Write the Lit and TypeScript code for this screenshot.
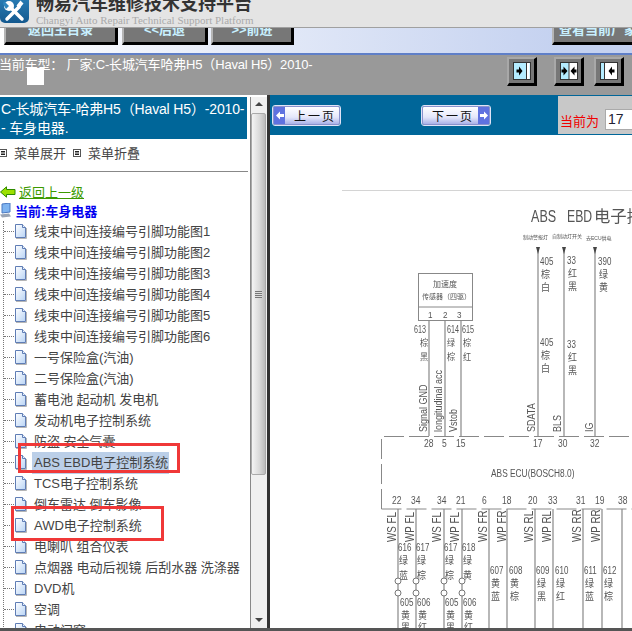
import { LitElement, html, css, svg } from "lit";
import { customElement } from "lit/decorators.js";

const items = [
  "线束中间连接编号引脚功能图1",
  "线束中间连接编号引脚功能图2",
  "线束中间连接编号引脚功能图3",
  "线束中间连接编号引脚功能图4",
  "线束中间连接编号引脚功能图5",
  "线束中间连接编号引脚功能图6",
  "一号保险盒(汽油)",
  "二号保险盒(汽油)",
  "蓄电池 起动机 发电机",
  "发动机电子控制系统",
  "防盗 安全气囊",
  "ABS EBD电子控制系统",
  "TCS电子控制系统",
  "倒车雷达 倒车影像",
  "AWD电子控制系统",
  "电喇叭 组合仪表",
  "点烟器 电动后视镜 后刮水器 洗涤器",
  "DVD机",
  "空调",
  "电动门窗",
];

const pageIcon = html`<svg class="page-icon" width="13" height="15" viewBox="0 0 13 15">
  <defs>
    <linearGradient id="pg" x1="0" y1="0" x2="1" y2="1">
      <stop offset="0" stop-color="#ffffff" />
      <stop offset="1" stop-color="#b9d4f5" />
    </linearGradient>
  </defs>
  <path d="M1.5 .5H8.5L11.5 3.5V13.5H1.5Z" fill="url(#pg)" stroke="#5f7db5" />
  <path d="M8.5 .5V3.5H11.5" fill="#eaf2fd" stroke="#5f7db5" />
  <path d="M2 14.5H12.5V4" fill="none" stroke="#b5b5b5" />
</svg>`;

const menuIcon = html`<svg class="menu-icon" width="8" height="8" viewBox="0 0 8 8">
  <rect x=".5" y=".5" width="7" height="7" fill="#fff" stroke="#555" />
  <path d="M2 2.5H6M2 4H6M2 5.5H6" stroke="#222" />
</svg>`;

// everything on the schematic uses page coordinates, see the viewBox below
function t(x: number, y: number, s: string, size = 10, sx = 0.8) {
  return svg`<text transform="translate(${x} ${y}) scale(${sx} 1)" font-size=${size}>${s}</text>`;
}
function up(x: number, y: number, s: string, size = 11, sx = 0.82) {
  return svg`<text transform="translate(${x} ${y}) rotate(-90) scale(${sx} 1)" font-size=${size}>${s}</text>`;
}
function stack(x: number, y: number, n: string, a: string, b: string, gap = 13) {
  return svg`${t(x, y, n)}${t(x + 1, y + 13, a, 10, 0.9)}${t(x + 1, y + 13 + gap, b, 10, 0.9)}`;
}
function wire(x: number, y1: number, y2: number) {
  return svg`<line x1=${x} y1=${y1} x2=${x} y2=${y2} class="wire" />`;
}
function arrow(x: number) {
  return svg`<path d="M${x - 2} 247H${x + 2}L${x} 254Z" fill="#444" />`;
}

const bottomPins: [number, string, number][] = [
  [392, "22", 398],
  [411, "34", 416],
  [437, "34", 444],
  [456, "21", 462],
  [482, "6", 489],
  [502, "18", 507],
  [528, "20", 535],
  [548, "33", 553],
  [576, "31", 583],
  [595, "19", 602],
  [618, "38", 622],
];

const schematic = svg`
  <line x1="342" y1="190" x2="632" y2="190" stroke="#aaa" />
  ${t(531, 222, "ABS", 17, 0.74)}
  ${t(567, 222, "EBD", 17, 0.72)}
  ${t(594, 222, "电子控制系统", 16, 1.02)}
  ${t(523, 239, "制动警报灯", 5, 1)}
  ${t(552, 238, "自制动灯开关", 5, 1)}
  ${t(586, 240, "去ECU供电", 5, 1)}
  ${[538, 564, 595].map((x) => svg`${wire(x, 249, 436)}${arrow(x)}`)}
  ${stack(540, 265, "405", "棕", "白")}
  ${stack(567, 264, "33", "红", "黑")}
  ${stack(598, 265, "390", "绿", "黄")}
  ${stack(540, 346, "405", "棕", "白")}
  ${stack(567, 348, "33", "红", "黑")}

  <rect x="418.5" y="273.5" width="54" height="47" fill="#fff" stroke="#888" />
  <line x1="418" y1="307" x2="472" y2="307" stroke="#888" />
  ${t(433, 287, "加速度", 8, 1)}
  ${t(422, 299, "传感器（四驱）", 7, 1)}
  ${t(428, 318, "1", 9, 0.9)}
  ${t(443, 318, "2", 9, 0.9)}
  ${t(457, 318, "3", 9, 0.9)}
  ${[429, 445, 461].map((x) => wire(x, 320, 436))}
  ${t(414, 333, "613", 10, 0.72)}
  ${t(447, 333, "614", 10, 0.72)}
  ${t(462, 333, "615", 10, 0.72)}
  ${t(420, 346, "棕", 9, 0.9)}
  ${t(420, 360, "黑", 9, 0.9)}
  ${t(447, 346, "绿", 9, 0.9)}
  ${t(447, 360, "棕", 9, 0.9)}
  ${t(463, 346, "棕", 9, 0.9)}
  ${t(463, 360, "红", 9, 0.9)}
  ${up(427, 432, "Signal GND")}
  ${up(442, 432, "longitudinal acc")}
  ${up(457, 432, "Vstob")}
  ${up(535, 432, "SDATA")}
  ${up(561, 432, "BLS")}
  ${up(593, 432, "IG")}

  <path d="M381.5 509V436.5H632M381.5 509H632" class="dash" />
  ${t(424, 447, "28", 10, 0.85)}
  ${t(442, 447, "5", 10, 0.85)}
  ${t(456, 447, "15", 10, 0.85)}
  ${t(533, 447, "17", 10, 0.85)}
  ${t(558, 447, "30", 10, 0.85)}
  ${t(590, 447, "32", 10, 0.85)}
  ${t(491, 477, "ABS ECU(BOSCH8.0)", 11, 0.76)}
  ${bottomPins.map(
    ([x, n, wx]) => svg`${t(x, 504, n, 10, 0.85)}${wire(wx, 509, 628)}`
  )}

  ${up(396, 542, "WS FL", 12)}
  ${up(414, 542, "WP FL", 12)}
  ${up(441, 542, "WS FL", 12)}
  ${up(459, 542, "WP FL", 12)}
  ${up(487, 542, "WS FR", 12)}
  ${up(506, 542, "WP FR", 12)}
  ${up(533, 542, "WS RL", 12)}
  ${up(551, 542, "WP RL", 12)}
  ${up(581, 542, "WS RR", 12)}
  ${up(600, 542, "WP RR", 12)}

  ${stack(398, 551, "616", "绿", "蓝", 15)}
  ${stack(416, 551, "617", "绿", "棕", 15)}
  ${stack(444, 551, "617", "绿", "棕", 15)}
  ${stack(462, 551, "618", "绿", "黄", 15)}
  ${[398, 416, 444, 462].map(
    (x) => svg`<circle cx=${x} cy="581" r="3" class="node" /><circle cx=${x} cy="593" r="3" class="node" />`
  )}
  ${stack(400, 606, "605", "黄", "黑", 12)}
  ${stack(417, 606, "606", "黄", "红", 12)}
  ${stack(445, 606, "605", "黄", "黑", 12)}
  ${stack(463, 606, "606", "黄", "红", 12)}
  ${stack(490, 574, "607", "黄", "蓝")}
  ${stack(509, 574, "608", "黄", "棕")}
  ${stack(536, 574, "609", "绿", "黑")}
  ${stack(555, 574, "610", "绿", "红")}
  ${stack(584, 574, "611", "绿", "蓝")}
  ${stack(603, 574, "612", "绿", "棕")}
`;

const arrowR = svg`<path d="M3.5 7.5H6V4.5L9.5 9L6 13.5V10.5H3.5Z" fill="#000" />`;
const arrowL = svg`<path d="M14.5 7.5H12V4.5L8.5 9L12 13.5V10.5H14.5Z" fill="#000" />`;

@customElement("app-root")
export class AppRoot extends LitElement {
  static styles = css`
    :host {
      display: block;
      width: 632px;
      height: 631px;
      overflow: hidden;
      position: relative;
      background: #fff;
      font-family: "Liberation Sans", "Noto Sans CJK SC", sans-serif;
      font-size: 13px;
    }

    /* top brand strip */
    .brand {
      height: 27px;
      background: #e4e4e4;
      border-bottom: 1px solid #a0a0a0;
      display: flex;
      overflow: hidden;
    }
    .logo {
      flex: none;
      margin-right: 6px;
    }
    .brand-title {
      font-family: "Liberation Serif", "Noto Sans CJK SC", serif;
      font-size: 18px;
      line-height: 18px;
      color: #333;
      margin-top: -5px;
      white-space: nowrap;
      font-weight: bold;
    }
    .brand-sub {
      font-family: "Liberation Serif", serif;
      font-size: 11px;
      line-height: 14px;
      color: #aaa;
      white-space: nowrap;
    }

    /* toolbar, buttons are cut by the strip above */
    .toolbar {
      height: 25px;
      background: linear-gradient(90deg, #fff 0%, #c5d2f0 88%);
      display: flex;
      align-items: flex-start;
      padding-left: 4px;
      border-bottom: 2px solid #5f7fc8;
      overflow: hidden;
    }
    .tool {
      flex: none;
      height: 14px;
      background: #777;
      border-left: 2px solid #b5b5b5;
      border-right: 3px solid #000;
      border-bottom: 3px solid #000;
      color: #c8f0ff;
      font-size: 13px;
      font-weight: bold;
      line-height: 3px;
      text-align: center;
      overflow: hidden;
      white-space: nowrap;
    }
    .tool.home {
      width: 109px;
      margin-right: 4px;
    }
    .tool.back {
      width: 81px;
      margin-right: 3px;
    }
    .tool.next {
      width: 78px;
    }
    .tool.maker {
      width: 73px;
      margin-left: auto;
      text-align: left;
      padding-left: 5px;
      border-right: 0;
    }

    /* grey model bar */
    .model {
      height: 40px;
      background: #999;
      position: relative;
      color: #fff;
      display: flex;
      justify-content: space-between;
    }
    .model-text {
      margin-left: -1px;
      margin-top: 2px;
      line-height: 15px;
      white-space: nowrap;
      letter-spacing: -0.17px;
    }
    .model-box {
      position: absolute;
      left: 27px;
      top: 13px;
      width: 17px;
      height: 17px;
      background: #fff;
    }
    .frames {
      display: flex;
      margin-right: 8px;
      margin-top: 2px;
    }
    .frame-btn {
      width: 25px;
      height: 24px;
      background: #777;
      border-style: solid;
      border-width: 2px 3px 3px 2px;
      border-color: #a8a8a8 #000 #000 #a8a8a8;
      display: flex;
      align-items: center;
      justify-content: center;
    }
    .frame-btn.a {
      margin-right: 17px;
    }
    .frame-btn.b {
      margin-right: 10px;
    }

    /* main split */
    .main {
      height: 533px;
      border-bottom: 3px solid #555;
      display: flex;
    }
    .side {
      width: 250px;
      flex: none;
      overflow: hidden;
      position: relative;
      padding-top: 2px;
    }
    .side-title {
      width: 247px;
      height: 42px;
      background: #006699;
      color: #fff;
      font-size: 14px;
      line-height: 19px;
      padding: 3px 0 0 1px;
      box-sizing: border-box;
      white-space: nowrap;
      letter-spacing: -0.15px;
    }
    .expand {
      height: 27px;
      padding-bottom: 5px;
      border-bottom: 1px solid #888;
      width: 248px;
      display: flex;
      align-items: center;
      color: #444;
    }
    .expand span {
      margin: 0 7px;
    }
    .menu-icon:first-child {
      margin-left: -1px;
    }
    .up-link {
      display: flex;
      align-items: center;
      height: 19px;
      margin-top: 10px;
      color: #3c9a00;
      text-decoration: underline;
      gap: 3px;
    }
    .current {
      display: flex;
      align-items: center;
      height: 19px;
      color: #0000f0;
      font-weight: bold;
      gap: 3px;
      margin-bottom: 1px;
    }
    .tree {
      margin-left: 3px;
      border-left: 1px dotted #777;
    }
    .row {
      height: 21px;
      display: flex;
      align-items: center;
      white-space: nowrap;
      color: #444;
    }
    .row::before {
      content: "";
      width: 10px;
      border-top: 1px dotted #777;
      flex: none;
    }
    .page-icon {
      flex: none;
      margin-right: 7px;
    }
    .label {
      padding: 2px 0;
      line-height: 16px;
    }
    .row.sel .label {
      background: #bbcfe8;
      padding: 3px 1px 3px 2px;
      margin-left: -2px;
    }

    .bar {
      width: 17px;
      flex: none;
      margin-top: 2px;
      border-left: 1px solid #888;
      background: #f0f0f0;
      position: relative;
      box-sizing: border-box;
    }
    .bar .thumb {
      position: absolute;
      left: 0;
      right: 1px;
      top: 16px;
      height: 362px;
      background: linear-gradient(90deg, #f4f4f4, #d8d8d8 60%, #bcbcbc);
      border: 1px solid #aaa;
      border-radius: 2px;
      box-sizing: border-box;
      display: flex;
      align-items: center;
      justify-content: center;
    }
    .grip {
      width: 7px;
      height: 7px;
      background: repeating-linear-gradient(#777 0 1px, #ddd 1px 2px);
    }
    .arr {
      position: absolute;
      left: 4px;
      width: 0;
      height: 0;
      border-left: 4px solid transparent;
      border-right: 4px solid transparent;
    }
    .arr.up {
      top: 5px;
      border-bottom: 4px solid #444;
    }
    .arr.down {
      bottom: 6px;
      border-top: 4px solid #444;
    }
    .split {
      width: 3px;
      flex: none;
      background: #333;
    }

    .content {
      flex: 1;
      min-width: 0;
      display: flex;
      flex-direction: column;
    }
    .pager {
      height: 40px;
      flex: none;
      background: #006699;
      display: flex;
    }
    .pager-left {
      flex: 1;
      display: flex;
      align-items: flex-start;
      padding: 11px 0 0 3px;
      gap: 82px;
    }
    .page-btn {
      height: 19px;
      box-sizing: border-box;
      border: 1px solid #8a92cc;
      outline: 1px solid #dfe3f7;
      background: linear-gradient(#fff, #e4e7fa 60%, #aab2e8);
      border-radius: 2px;
      display: flex;
      align-items: center;
      color: #111;
      font-size: 12px;
      letter-spacing: 2px;
      white-space: nowrap;
    }
    .page-btn .tip {
      width: 11px;
      height: 100%;
      background: #5f72e0;
      display: flex;
      align-items: center;
      justify-content: center;
      flex: none;
    }
    .page-btn .cap {
      flex: 1;
    }
    .page-btn.prev {
      width: 67px;
    }
    .page-btn.prev .cap {
      padding-left: 9px;
    }
    .page-btn.next {
      width: 68px;
    }
    .page-btn.next .cap {
      padding-left: 9px;
    }
    .page-now {
      width: 74px;
      flex: none;
      margin-top: 1px;
      height: 38px;
      background: #c8c8c8;
      display: flex;
      align-items: flex-end;
      padding: 0 0 4px 2px;
      box-sizing: border-box;
      color: #f00000;
      gap: 6px;
      white-space: nowrap;
    }
    .page-now .num {
      width: 40px;
      height: 21px;
      flex: none;
      box-sizing: border-box;
      background: #fff;
      border: 1px solid #aaa;
      color: #223;
      padding-left: 2px;
      font-size: 14px;
      line-height: 19px;
    }
    .sheet {
      flex: 1;
      min-height: 0;
      display: block;
      width: 362px;
      height: 493px;
    }
    .sheet text {
      fill: #555;
      font-family: "Liberation Sans", "Noto Sans CJK SC", sans-serif;
    }
    .wire {
      stroke: #888;
      stroke-width: 1.2;
    }
    .dash {
      fill: none;
      stroke: #888;
      stroke-dasharray: 20 5;
    }
    .node {
      fill: #fff;
      stroke: #777;
    }

    /* hand drawn red marks on top of the tree */
    .mark {
      position: absolute;
      box-sizing: border-box;
      border: 3px solid #f03838;
    }
    .mark.one {
      left: 18px;
      top: 443px;
      width: 162px;
      height: 30px;
    }
    .mark.two {
      left: 11px;
      top: 506px;
      width: 153px;
      height: 35px;
    }
  `;

  render() {
    return html`
      <div class="brand">
        <svg class="logo" width="30" height="24" viewBox="0 0 30 24">
          <defs>
            <linearGradient id="tile" x1="0" y1="0" x2="0" y2="1">
              <stop offset="0" stop-color="#2f86bd" />
              <stop offset="1" stop-color="#14598f" />
            </linearGradient>
          </defs>
          <rect x="0" y="-8" width="29" height="31" rx="5" fill="url(#tile)" />
          <path d="M11 8L22 19" stroke="#fff" stroke-width="3.5" stroke-linecap="round" />
          <circle cx="9" cy="6" r="5" fill="#fff" />
          <path d="M4 1L9 6L6 9L3 4Z" fill="#2f86bd" />
          <path d="M19 7L7 19" stroke="#fff" stroke-width="3.5" stroke-linecap="round" />
          <path d="M17 6L21 1M19 8L23 3M18 7L22 2" stroke="#fff" stroke-width="1.3" />
        </svg>
        <div>
          <div class="brand-title">畅易汽车维修技术支持平台</div>
          <div class="brand-sub">Changyi Auto Repair Technical Support Platform</div>
        </div>
      </div>

      <div class="toolbar">
        <div class="tool home">返回主目录</div>
        <div class="tool back">&lt;&lt;后退</div>
        <div class="tool next">&gt;&gt;前进</div>
        <div class="tool maker">查看当前厂家</div>
      </div>

      <div class="model">
        <div class="model-text">当前车型：&nbsp;厂家:C-长城汽车哈弗H5（Haval H5）2010-</div>
        <div class="model-box"></div>
        <div class="frames">
          <div class="frame-btn a">${this.frameIcon("right")}</div>
          <div class="frame-btn b">${this.frameIcon("both")}</div>
          <div class="frame-btn">${this.frameIcon("left")}</div>
        </div>
      </div>

      <div class="main">
        <div class="side">
          <div class="side-title">C-长城汽车-哈弗H5（Haval H5）-2010-<br />- 车身电器.</div>
          <div class="expand">
            ${menuIcon}<span>菜单展开</span>${menuIcon}<span>菜单折叠</span>
          </div>
          <div class="up-link">
            <svg width="16" height="12" viewBox="0 0 16 12">
              <path d="M.5 6L6.5 .8V3.5H15V8.5H6.5V11.2Z" fill="#9ce000" stroke="#2f8a00" />
            </svg>
            返回上一级
          </div>
          <div class="current">
            <svg width="12" height="15" viewBox="0 0 12 15">
              <path d="M2 1L10 0V9L2 10Z" fill="#7fb4f0" stroke="#4a78c0" />
              <path d="M0 11.5L9 10.5L11 13.5L2 14.5Z" fill="#9aa4b4" />
            </svg>
            当前:车身电器
          </div>
          <div class="tree">
            ${items.map(
              (name, i) => html`<div class="row ${i === 11 ? "sel" : ""}">
                ${pageIcon}<span class="label">${name}</span>
              </div>`
            )}
          </div>
        </div>
        <div class="bar">
          <div class="arr up"></div>
          <div class="thumb"><div class="grip"></div></div>
          <div class="arr down"></div>
        </div>
        <div class="split"></div>
        <div class="content">
          <div class="pager">
            <div class="pager-left">
              <div class="page-btn prev">
                <span class="tip">
                  <svg width="8" height="9" viewBox="0 0 8 9"><path d="M0 4.5L4 .5V3H8V6H4V8.5Z" fill="#fff" /></svg>
                </span>
                <span class="cap">上一页</span>
              </div>
              <div class="page-btn next">
                <span class="cap">下一页</span>
                <span class="tip">
                  <svg width="8" height="9" viewBox="0 0 8 9"><path d="M8 4.5L4 .5V3H0V6H4V8.5Z" fill="#fff" /></svg>
                </span>
              </div>
            </div>
            <div class="page-now">当前为<div class="num">17</div></div>
          </div>
          <svg class="sheet" viewBox="270 135 362 493">
            <defs>
              <filter id="soft" x="0" y="0" width="100%" height="100%">
                <feGaussianBlur stdDeviation="0.35" />
              </filter>
            </defs>
            <g filter="url(#soft)">${schematic}</g>
          </svg>
        </div>
      </div>

      <div class="mark one"></div>
      <div class="mark two"></div>
    `;
  }

  frameIcon(kind: "right" | "both" | "left") {
    const blue = "#b4ecff";
    const parts =
      kind === "right"
        ? svg`<rect x="1" y="1" width="16" height="16" fill=${blue} />
            <rect x="13.5" y="1" width="3" height="16" fill="#fff" />
            <path d="M13.5 1V17" stroke="#333" />${arrowR}`
        : kind === "left"
          ? svg`<rect x="1" y="1" width="16" height="16" fill="#fff" />
              <rect x="1" y="1" width="3" height="16" fill=${blue} />
              <path d="M4.5 1V17" stroke="#333" />${arrowL}`
          : svg`<rect x="1" y="1" width="8" height="16" fill=${blue} />
              <rect x="9" y="1" width="8" height="16" fill="#fff" />
              <path d="M9 1V17" stroke="#333" />
              <path d="M1.5 7.5H3.5V4.5L7.5 9L3.5 13.5V10.5H1.5Z" fill="#000" />
              <path d="M16.5 7.5H14.5V4.5L10.5 9L14.5 13.5V10.5H16.5Z" fill="#000" />`;
    return html`<svg width="18" height="18" viewBox="0 0 18 18">
      ${parts}
      <rect x=".5" y=".5" width="17" height="17" fill="none" stroke="#333" />
    </svg>`;
  }
}
